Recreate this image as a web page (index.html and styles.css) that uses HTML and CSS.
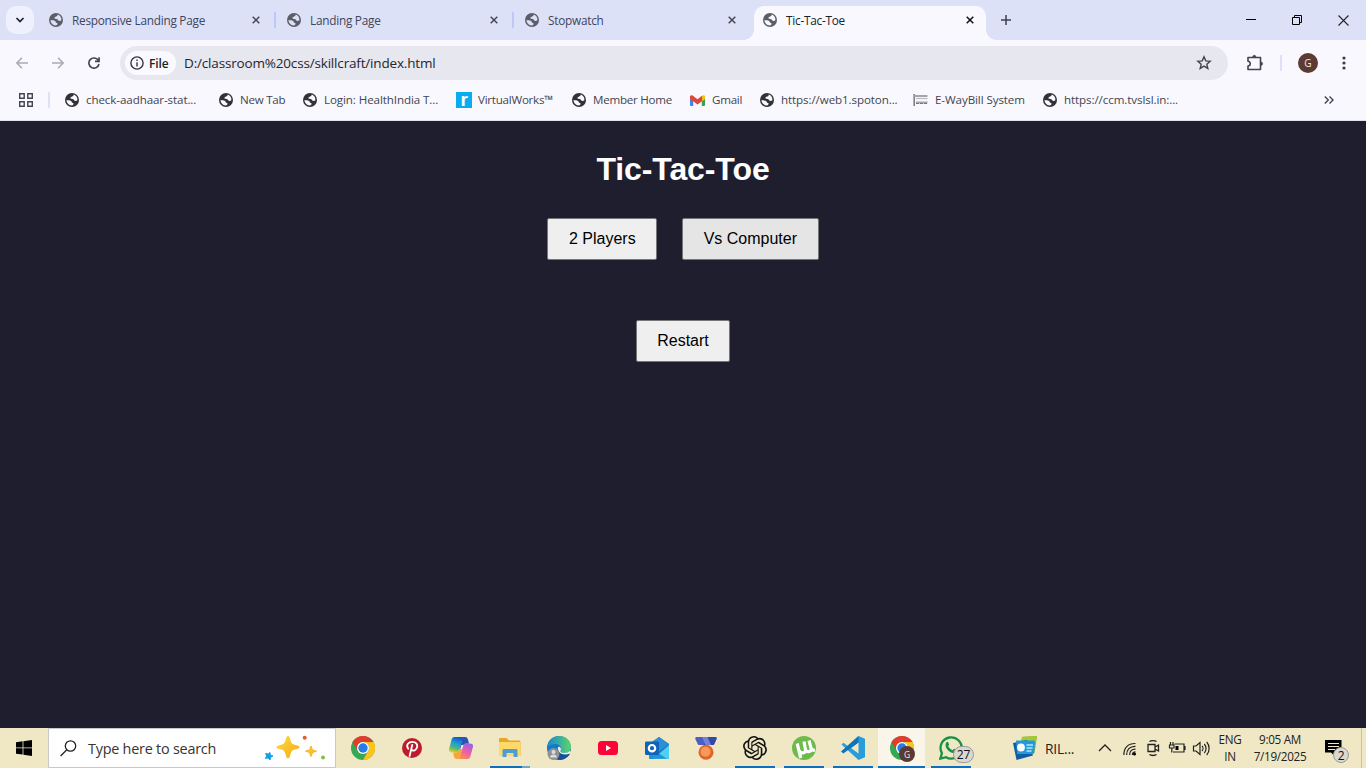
FILE: index.html
```
<!DOCTYPE html>
<html lang="en">
<head>
<meta charset="utf-8">
<title>Tic-Tac-Toe</title>
<link rel="stylesheet" href="styles.css">
</head>
<body>
<svg class="defs" aria-hidden="true">
  <defs>
    <symbol id="globe" viewBox="0 0 14 14"><circle cx="7" cy="7" r="7" fill="currentColor"/><path class="land" d="M8.500 1.500C9 2.800 8 3.200 7 3.500 6 4 5 4.500 5.600 5.500 6.500 6.300 8.500 5.600 9 6.900c.5 1.300 2.300 1.200 3.400.3C12.600 4.200 11 2 8.500 1.500zM1.500 7.100C3 7.500 5 7.100 6 8.100c1 .8.500 1.800 2 2 1.200.3.500 2.100-1 2.400C4 12.600 1.500 10.100 1.500 7.100z"/></symbol>
    <symbol id="close" viewBox="0 0 8 8"><path d="M.7.700l6.600 6.600M7.300.700L.7 7.300" stroke="currentColor" stroke-width="1.500"/></symbol>
    <linearGradient id="gold" x2="1" y2="1"><stop stop-color="#ffdc42"/><stop offset="1" stop-color="#f5a912"/></linearGradient>
    <linearGradient id="edgeTop"><stop stop-color="#1689d0"/><stop offset="1" stop-color="#5ed568"/></linearGradient>
    <linearGradient id="copA" x1=".6" x2=".3" y2="1"><stop stop-color="#174ccf"/><stop offset=".45" stop-color="#1ba6cf"/><stop offset=".75" stop-color="#5cb96b"/><stop offset="1" stop-color="#e9cf31"/></linearGradient>
    <linearGradient id="copB" x1=".8" x2=".2" y2="1"><stop stop-color="#9461ed"/><stop offset=".5" stop-color="#ee5fa4"/><stop offset="1" stop-color="#fa9545"/></linearGradient>
    <symbol id="chrome" viewBox="0 0 24 24"><circle cx="12" cy="12" r="12" fill="#34a853"/><path d="M1.600 6A12 12 0 0 1 22.400 6H12a6 6 0 0 0-5.200 9z" fill="#e33b2e"/><path d="M22.400 6A12 12 0 0 1 12 24l5.200-9A6 6 0 0 0 12 6z" fill="#fcc31e"/><circle cx="12" cy="12" r="6" fill="#fff"/><circle cx="12" cy="12" r="4.700" fill="#277ae8"/></symbol>
  </defs>
</svg>

<header class="browser">
  <div class="tabstrip">
    <button class="tab-search"><svg width="10" height="6" viewBox="0 0 10 6"><path d="M1.500 1L5 4.500 8.500 1" fill="none" stroke="#202124" stroke-width="1.700"/></svg></button>
    <div class="tab"><svg class="fav"><use href="#globe"/></svg><span class="tab-title">Responsive Landing Page</span><svg class="x"><use href="#close"/></svg></div>
    <div class="tab sep"><svg class="fav"><use href="#globe"/></svg><span class="tab-title">Landing Page</span><svg class="x"><use href="#close"/></svg></div>
    <div class="tab sep"><svg class="fav"><use href="#globe"/></svg><span class="tab-title">Stopwatch</span><svg class="x"><use href="#close"/></svg></div>
    <div class="tab active"><svg class="fav"><use href="#globe"/></svg><span class="tab-title">Tic-Tac-Toe</span><svg class="x"><use href="#close"/></svg></div>
    <svg class="plus" width="10" height="10" viewBox="0 0 10 10"><path d="M5 0v10M0 5h10" stroke="#3c4050" stroke-width="1.500"/></svg>
    <div class="window-controls">
      <svg width="10" height="10" viewBox="0 0 10 10"><path d="M0 4.500h10" stroke="#000"/></svg>
      <svg width="10" height="10" viewBox="0 0 10 10"><path d="M.5 2.500h7v7h-7zM2.500 2.500v-2h7v7h-2" fill="none" stroke="#000"/></svg>
      <svg width="11" height="11" viewBox="0 0 11 11"><path d="M.5.500l10 10M10.500.500l-10 10" fill="none" stroke="#222" stroke-width="1.100"/></svg>
    </div>
  </div>

  <div class="toolbar">
    <div class="nav">
      <svg width="12" height="12" viewBox="0 0 12 12"><path d="M12 6H1M6 .800L.900 6 6 11.200" fill="none" stroke="#a9abb2" stroke-width="1.500"/></svg>
      <svg width="12" height="12" viewBox="0 0 12 12"><path d="M0 6h11M6 .800L11.100 6 6 11.200" fill="none" stroke="#a9abb2" stroke-width="1.500"/></svg>
      <svg width="12" height="12" viewBox="0 0 12 12"><path d="M10.300 3.300A5.100 5.100 0 1 0 11 7M11.100.300v4.100H7" fill="none" stroke="#41434d" stroke-width="1.600"/></svg>
    </div>
    <div class="omnibox">
      <span class="chip"><svg width="14" height="14" viewBox="0 0 14 14"><circle cx="7" cy="7" r="6.100" fill="none" stroke="#34363c" stroke-width="1.400"/><path d="M7 6.200v4.200M7 3.500v1.500" stroke="#34363c" stroke-width="1.400"/></svg><span class="chip-label">File</span></span>
      <span class="url">D:/classroom%20css/skillcraft/index.html</span>
      <svg class="star" width="16" height="16" viewBox="0 0 16 16"><path d="M8 1.800l1.750 4.050 4.400.4-3.330 2.900 1 4.300L8 11.150l-3.820 2.300 1-4.300-3.330-2.900 4.400-.4z" fill="none" stroke="#42444e" stroke-width="1.400"/></svg>
    </div>
    <svg class="puzzle" width="18" height="18" viewBox="0 0 18 18"><path d="M2 3.500h12.500v12H2v-3.500c3 0 3-4.800 0-4.800z" fill="none" stroke="#42444e" stroke-width="1.600" stroke-linejoin="round"/><path d="M6.700 3.200a1.600 1.900 0 0 1 3.200 0zM14.700 8a1.900 1.700 0 0 1 0 3.400z" fill="#42444e" stroke="#42444e" stroke-width=".7"/></svg>
    <span class="divider"></span>
    <span class="avatar">G</span>
    <svg class="kebab" width="4" height="14" viewBox="0 0 4 14"><g fill="#3c3e47"><circle cx="2" cy="2" r="1.600"/><circle cx="2" cy="7" r="1.600"/><circle cx="2" cy="12" r="1.600"/></g></svg>
  </div>

  <nav class="bookmarks">
    <span class="apps-grid"><svg width="14" height="14" viewBox="0 0 14 14"><path d="M.7.700h4.500v4.500H.7zM8.800.700h4.500v4.500H8.800zM.7 8.800h4.500v4.500H.7zM8.800 8.800h4.500v4.500H8.800z" fill="none" stroke="#42444e" stroke-width="1.400"/></svg></span>
    <span class="divider"></span>
    <a class="bm"><svg class="fav"><use href="#globe"/></svg><span class="clipped">check-aadhaar-stat...</span></a>
    <a class="bm"><svg class="fav"><use href="#globe"/></svg><span>New Tab</span></a>
    <a class="bm"><svg class="fav"><use href="#globe"/></svg><span class="clipped">Login: HealthIndia T...</span></a>
    <a class="bm"><span class="r-logo">r</span><span>VirtualWorks™</span></a>
    <a class="bm"><svg class="fav"><use href="#globe"/></svg><span>Member Home</span></a>
    <a class="bm"><svg class="gm" width="15" height="11" viewBox="0 0 15 11"><path d="M0 1.500h3.200V11H1a1 1 0 0 1-1-1z" fill="#3f83ef"/><path d="M11.800 1.500H15V10a1 1 0 0 1-1 1h-2.200z" fill="#32a454"/><path d="M11.800 1.500L13 .300C14 0 15 .500 15 1.700V4l-3.200 2.400z" fill="#f7bc1c"/><path d="M0 1.700C0 .300 1.600-.300 2.600.500l4.900 3.700L12 .700v5.600L7.500 9.500 0 4z" fill="#e3453a"/></svg><span>Gmail</span></a>
    <a class="bm"><svg class="fav"><use href="#globe"/></svg><span class="clipped">https://web1.spoton...</span></a>
    <a class="bm"><svg class="eway" width="15" height="14" viewBox="0 0 15 14"><path d="M1.200 1v12" stroke="#77777c" stroke-width="1.500"/><path d="M0 3h14.500M3 9.500h11.500" stroke="#a5a5a9" stroke-width="2"/><path d="M3 5.500h11.500" stroke="#b9b9be" stroke-width="1.200"/><path d="M3 10.500h11" stroke="#77777c" stroke-dasharray="3 1"/></svg><span class="clipped">E-WayBill System</span></a>
    <a class="bm"><svg class="fav"><use href="#globe"/></svg><span class="clipped">https://ccm.tvslsl.in:...</span></a>
    <svg class="more" width="10" height="8" viewBox="0 0 10 8"><path d="M.8.500L4.300 4 .8 7.500M5.500.500L9 4 5.500 7.500" fill="none" stroke="#42444e" stroke-width="1.400"/></svg>
  </nav>
</header>

<main class="game">
  <h1>Tic-Tac-Toe</h1>
  <div class="modes"><button>2 Players</button><button class="hover">Vs Computer</button></div>
  <button>Restart</button>
</main>

<footer class="taskbar">
  <div class="start"><svg width="16" height="16" viewBox="0 0 16 16"><path d="M0 2.200l6.600-.9v6.200H0zM7.400 1.200L16 0v7.500H7.400zM0 8.300h6.600v6.300L0 13.700zM7.400 8.300H16V16l-8.600-1.200z"/></svg></div>
  <div class="search">
    <svg width="17" height="17" viewBox="0 0 17 17"><circle cx="10.500" cy="6" r="5.200" fill="none" stroke="#222" stroke-width="1.300"/><path d="M6.800 9.800L.6 16" stroke="#222" stroke-width="1.300"/></svg>
    <span>Type here to search</span>
    <svg class="sparkles" width="62" height="26" viewBox="0 0 62 26"><path d="M24 1c1.300 0 1.600 1 2.400 3.800 1 3.600 1.800 4.400 5.300 5.200 2.900.7 3.800 1 3.800 2.100s-.9 1.400-3.800 2.100c-3.500.8-4.300 1.700-5.300 5.200-.8 2.900-1.100 3.800-2.400 3.800s-1.600-.9-2.400-3.800c-1-3.500-1.800-4.400-5.300-5.200-2.900-.7-3.800-1-3.800-2.100s.9-1.400 3.800-2.100c3.500-.8 4.300-1.600 5.300-5.200C22.400 2 22.700 1 24 1z" fill="url(#gold)"/><path d="M47 11l1.500 3.900 4 1.300-4 1.300L47 21.500l-1.500-4-4-1.300 4-1.300z" fill="url(#gold)" stroke="#f5b52b" stroke-linejoin="round"/><path d="M6 17.500l.3 2.700 2.700.8-2.400 1.300-.6 2.700-1.800-2-2.900.3 1.500-2.300-1.200-2.500 2.600.6z" fill="#15a0e8" stroke="#15a0e8" stroke-linejoin="round"/><circle cx="40.700" cy="2.700" r="2" fill="#e5592e"/><circle cx="59" cy="22.500" r="1.900" fill="#7fbd43"/></svg>
  </div>
  <div class="apps">
    <div class="app"><svg><use href="#chrome"/></svg></div>
    <div class="app"><svg class="pin" viewBox="0 0 20 20"><circle cx="10" cy="10" r="10" fill="#bb1d2d"/><path d="M6.200 10.700C3.500 6.600 6.700 3.900 10.400 3.900c3.500 0 5.200 2.100 4.800 4.800-.4 3-3.900 5.300-5.700 2.900M10.300 6.800L7.600 18" fill="none" stroke="#fff" stroke-width="1.800" stroke-linecap="round"/></svg></div>
    <div class="app"><svg viewBox="0 0 24 24"><path d="M5.500 1H16c-2 .5-2.600 2-3.200 4l-2.600 8.500c-.6 2-1.400 3-3.200 3H3c-2.500 0-3.500-1.500-2.800-4L2.500 4c.6-2 1.300-3 3-3z" fill="url(#copA)"/><path d="M18.500 23H8c2-.5 2.600-2 3.200-4l2.600-8.500c.6-2 1.400-3 3.200-3H21c2.500 0 3.500 1.500 2.800 4L21.500 20c-.6 2-1.300 3-3 3z" fill="url(#copB)"/><path d="M12 1h4c2 0 2.600 1 3.100 3l.9 3.500h-3c-1.800 0-2.600 1-3.200 3l-.8 2.500h-2.700L12.800 5z" fill="#2455b8"/><path d="M4.200 16.500H7c1.800 0 2.600-1 3.200-3l.2-.5H13l-1.800 6c-.6 2-1.200 3.500-3.200 4-2 0-2.600-1-3.100-3z" fill="#f7a534"/><path d="M11.200 13l1.200-4h2l-1.200 4z" fill="#f7f3ef"/></svg></div>
    <div class="app run-multi"><svg viewBox="0 0 24 24"><path d="M1 3.500c0-.8.500-1.500 1.300-1.500h6.200L11 4.500h10c1 0 1.500.6 1.500 1.500v14H2c-.6 0-1-.4-1-1z" fill="#e5a62d"/><path d="M1 6h21.500v13c0 .6-.4 1-1 1H2c-.6 0-1-.4-1-1z" fill="#ffd967"/><path d="M6 13h12c1 0 1.500.5 1.500 1.500v6.500h-4v-4h-7v4h-4v-6.500C4.500 13.500 5 13 6 13z" fill="#4c9dd4"/></svg></div>
    <div class="app"><svg viewBox="0 0 24 24"><circle cx="12" cy="12" r="12" fill="#1477c9"/><path d="M.4 11C1 4.400 6 0 12 0c7 0 12 5 12 10.500 0 4-3 6.500-7 6.500-3 0-4.500-1.100-3.500-2.500 3-6-6-9.500-13.100-3.500z" fill="url(#edgeTop)"/><path d="M12 10.500c1.800 1 2.500 2.500 1.500 4-.7 1.500.8 2.500 3.500 2.500 2.500 0 4.500-1 5.800-2.300l1.200 2.300-3 2c-5 2.500-11-.5-10.500-5.500.1-1.200.5-2.200 1.500-3z" fill="#f4f3df"/><path d="M12 24c5 0 9-2.500 11-6.500-7 2.600-12-.5-12-5-5 3-4 9 1 11.500z" fill="#154f9d"/><circle cx="6.500" cy="18" r="6" fill="#8f9192"/><circle cx="6.500" cy="16" r="2" fill="#dedede"/><path d="M3 21.500c0-4 7-4 7 0z" fill="#dedede"/></svg></div>
    <div class="app"><svg class="yt" viewBox="0 0 20 14"><rect width="20" height="14" rx="3.500" fill="#ff0338"/><path d="M8 4v6l5-3z" fill="#fff"/></svg></div>
    <div class="app"><svg viewBox="0 0 24 24"><path d="M4 9L14 1l10 7v13.500c0 .8-.6 1.500-1.500 1.500h-17C4.500 23 4 22.500 4 21z" fill="#1470b7"/><path d="M5 7l9-6 10 7-10 8z" fill="#2c8fd6"/><path d="M24 9v12.500c0 .8-.6 1.500-1.500 1.500H8z" fill="#4fd0ee"/><path d="M4 11l18 11.800H5.500C4.600 22.800 4 22 4 21z" fill="#2293d7"/><rect y="5.500" width="14" height="13.500" rx="1.300" fill="#0f64b7"/><circle cx="7" cy="12.200" r="3.200" fill="none" stroke="#fff" stroke-width="2.200"/></svg></div>
    <div class="app"><svg viewBox="0 0 24 24"><path d="M2.500 1h19c1 0 1.500 1 1 2l-2 4.500c-.4 1-1 1.500-2 1.500h-13c-1 0-1.600-.5-2-1.500L1.300 3C1 2 1.500 1 2.500 1z" fill="#4b5fc4"/><path d="M13 1h8.500c1 0 1.500 1 1 2l-2 4.500c-.4 1-1 1.500-2 1.500H10z" fill="#3448a4"/><path d="M8 1h5.500l3.500 8h-5.500z" fill="#6f82dc"/><circle cx="12" cy="16.300" r="7.500" fill="#e0652a"/><circle cx="11.500" cy="15.800" r="5" fill="#f59a58"/></svg></div>
    <div class="app run"><svg viewBox="0 0 24 24"><path fill="#111" d="M22.2819 9.8211a5.9847 5.9847 0 0 0-.5157-4.9108 6.0462 6.0462 0 0 0-6.5098-2.9A6.0651 6.0651 0 0 0 4.9807 4.1818a5.9847 5.9847 0 0 0-3.9977 2.9 6.0462 6.0462 0 0 0 .7427 7.0966 5.98 5.98 0 0 0 .511 4.9107 6.051 6.051 0 0 0 6.5146 2.9001A5.9847 5.9847 0 0 0 13.2599 24a6.0557 6.0557 0 0 0 5.7718-4.2058 5.9894 5.9894 0 0 0 3.9977-2.9001 6.0557 6.0557 0 0 0-.7475-7.0729zm-9.022 12.6081a4.4755 4.4755 0 0 1-2.8764-1.0408l.1419-.0804 4.7783-2.7582a.7948.7948 0 0 0 .3927-.6813v-6.7369l2.02 1.1686a.071.071 0 0 1 .038.052v5.5826a4.504 4.504 0 0 1-4.4945 4.4944zm-9.6607-4.1254a4.4708 4.4708 0 0 1-.5346-3.0137l.142.0852 4.783 2.7582a.7712.7712 0 0 0 .7806 0l5.8428-3.3685v2.3324a.0804.0804 0 0 1-.0332.0615L9.74 19.9502a4.4992 4.4992 0 0 1-6.1408-1.6464zM2.3408 7.8956a4.485 4.485 0 0 1 2.3655-1.9728V11.6a.7664.7664 0 0 0 .3879.6765l5.8144 3.3543-2.0201 1.1685a.0757.0757 0 0 1-.071 0l-4.8303-2.7865A4.504 4.504 0 0 1 2.3408 7.872zm16.5963 3.8558L13.1038 8.364 15.1192 7.2a.0757.0757 0 0 1 .071 0l4.8303 2.7913a4.4944 4.4944 0 0 1-.6765 8.1042v-5.6772a.79.79 0 0 0-.407-.667zm2.0107-3.0231l-.142-.0852-4.7735-2.7818a.7759.7759 0 0 0-.7854 0L9.409 9.2297V6.8974a.0662.0662 0 0 1 .0284-.0615l4.8303-2.7866a4.4992 4.4992 0 0 1 6.6802 4.66zM8.3065 12.863l-2.02-1.1638a.0804.0804 0 0 1-.038-.0567V6.0742a4.4992 4.4992 0 0 1 7.3757-3.4537l-.142.0805L8.704 5.459a.7948.7948 0 0 0-.3927.6813zm1.0976-2.3654l2.602-1.4998 2.6069 1.4998v2.9994l-2.5974 1.4997-2.6067-1.4997Z"/></svg></div>
    <div class="app run"><svg viewBox="0 0 24 24"><circle cx="12" cy="12" r="12" fill="#6dbb4b"/><path d="M5.200 7.500L8.700 22M7 14.500c.8 3 6.800 3.500 6.500-.5L12 5.500M13.300 13c.7 3.200 4 3.500 6.200 1L17 4.500M19 12c.6 2 2 2.500 4 2" fill="none" stroke="#fff" stroke-width="3.200"/></svg></div>
    <div class="app run"><svg viewBox="0 0 24 24"><path d="M17.500 0L6.700 10 2.500 6.700.500 8.400 17.500 24 24 21.200V2.800z" fill="#2a9cdc"/><path d="M17.500 6.500L10 12l7.500 5.500z" fill="#f0e8c5"/><path d="M0 15.500L17.500 0v6.500L2.300 17.500z" fill="#1274b8"/></svg></div>
    <div class="app run current"><svg><use href="#chrome"/></svg><span class="profile">G</span></div>
    <div class="app run"><svg viewBox="0 0 24 24"><path d="M1.400 22.600l1.500-5.500A10.600 10.600 0 1 1 7 21.200z" fill="none" stroke="#159447" stroke-width="2.300"/><path d="M7.200 6.500c1.300-1.300 2-.5 2.700 1.400.5 1-.3 1.600-.8 2.200 1 2 2.500 3.300 4.500 4.200.8-.6 1.300-1.800 2.100-1.400 2.200 1 2.800 1.300 2 2.800-1.500 2.300-4.600 1.500-7.200-.2C7.800 13.800 5.400 10 7.200 6.500z" fill="#159447"/></svg><span class="count">27</span></div>
  </div>
  <div class="news"><svg width="24" height="24" viewBox="0 0 24 24"><path d="M9 1l15-1-2.500 17L8 13z" fill="#69ae4d"/><path d="M9 .800L24 0l-1 6H8z" fill="#a5c838"/><path d="M0 7l14-3 6 15.500L3.500 24z" fill="#125ca3"/><path d="M3 4.500h18c.6 0 1 .4 1 1L21 17c0 .6-.4 1-1 1H4z" fill="#2298df"/><circle cx="8" cy="11.500" r="3.900" fill="#fff"/><path d="M13.500 9H20M13.500 12h6M13.500 15h5" stroke="#b5e6f5" stroke-width="1.500"/></svg><span>RIL...</span></div>
  <div class="tray">
    <svg viewBox="0 0 18 18"><path d="M3 12l6-6 6 6" fill="none" stroke="#222" stroke-width="1.300"/></svg>
    <svg viewBox="0 0 18 18"><g fill="none" stroke="#222" stroke-width="1.200"><path d="M4 16C3.500 9 8 4.300 15.500 4.500M6.700 16c-.3-5 3-9 8.800-8.700M9.700 16c-.3-3.500 2-6 5.800-5.900M12.400 16c-.1-1.800 1.100-3.100 3.100-3.200"/></g><circle cx="14.500" cy="15" r="1.500"/></svg>
    <svg viewBox="0 0 18 18"><path d="M5.500 2.500c1.500-1.300 5.500-1.300 7 0M5.500 15.500c1.500 1.300 5.500 1.300 7 0M4 5.500h7v7H4zM11 8l3.500-2v6L11 10z" fill="none" stroke="#222" stroke-width="1.300"/></svg>
    <svg viewBox="0 0 18 18"><path d="M6.500 5H16v8H5M16 7.500h1v3h-1M2.500 3v3M5 3v3M1.500 6H6v3H1.500zM3.800 9v4.500" fill="none" stroke="#222" stroke-width="1.200"/><path d="M7.500 7h3v4h-3z"/></svg>
    <svg viewBox="0 0 18 18"><path d="M1.500 7H4l4-3.500v12L4 12H1.500zM10 7c1.300 1.300 1.300 3.700 0 5M12.300 5c2.300 2.500 2.300 6.500 0 9M14.700 3c3.200 3.500 3.200 9.500 0 13" fill="none" stroke="#222" stroke-width="1.200"/></svg>
  </div>
  <div class="lang"><span>ENG</span><span>IN</span></div>
  <div class="clock"><span>9:05 AM</span><span>7/19/2025</span></div>
  <div class="notify"><svg width="17" height="17" viewBox="0 0 17 17"><path d="M0 0h16.500v12.500h-7V16l-3.500-3.500H0z"/><path d="M3 3.500h11M3 6.500h11M3 9.500h7" stroke="#f1eac7"/></svg><span class="count small">2</span></div>
</footer>
</body>
</html>
```
FILE: styles.css
```
* { box-sizing: border-box; }
body { margin: 0; width: 1366px; height: 768px; display: flex; flex-direction: column; overflow: hidden; background: #1e1e2f; font-family: "Open Sans", "Noto Sans", sans-serif; font-size: 12px; }
svg { display: block; flex: none; }
.defs { position: absolute; width: 0; height: 0; }
button { cursor: default; }

.browser { height: 121px; background: #f9f8fe; border-bottom: 1px solid #e1e1eb; flex: none; --surface: #f9f8fe; }
.tabstrip { height: 40px; display: flex; background: #dde1f7; color: #41455a; --surface: #dde1f7; }
.tab-search { width: 28px; height: 28px; margin: 6px 7px 0 6px; padding: 0; border: 0; border-radius: 10px; background: #eff0fd; display: grid; place-items: center; flex: none; }
.tab { width: 238px; height: 34px; margin-top: 6px; padding: 0 19px 6px 8px; display: flex; align-items: center; position: relative; flex: none; }
.tab.sep::before { content: ""; position: absolute; left: -5px; top: 6px; width: 2px; height: 16px; background: #bdc8f8; }
.fav { width: 14px; height: 14px; color: #5b5e67; flex: none; }
.land { fill: var(--surface); }
.tab-title { margin-left: 9px; flex: 1; white-space: nowrap; letter-spacing: -.25px; font-size: 11.800px; }
.x { width: 8px; height: 8px; color: #444754; }
.tab.active { width: 232px; margin-left: -1px; padding: 0 12px 6px 9px; background: #f9f8fe; border-radius: 10px 10px 0 0; color: #202124; --surface: #f9f8fe; }
.active .x { color: #111; }
.tab.active::before, .tab.active::after { content: ""; position: absolute; bottom: 0; width: 10px; height: 10px; }
.tab.active::before { left: -10px; background: radial-gradient(circle at 0 0, #dde1f7 9.500px, #f9f8fe 10px); }
.tab.active::after { right: -10px; background: radial-gradient(circle at 100% 0, #dde1f7 9.500px, #f9f8fe 10px); }
.plus { margin: 15px 0 0 15px; }
.window-controls { margin: 15px 17px 0 auto; display: flex; gap: 36px; }

.toolbar { height: 46px; display: flex; align-items: center; }
.nav { width: 120px; padding-left: 16px; display: flex; gap: 24px; }
.omnibox { width: 1108px; height: 34px; border-radius: 17px; background: #e7e7f0; display: flex; align-items: center; padding: 0 16px 0 5px; }
.chip { width: 51px; height: 24px; border-radius: 12px; background: #faf9ff; display: flex; align-items: center; padding-left: 5px; gap: 5px; }
.chip-label { font-weight: 600; font-size: 12px; color: #202124; letter-spacing: -.1px; }
.url { margin-left: 8px; font-size: 13.500px; color: #25262b; flex: 1; letter-spacing: -.17px; }
.puzzle { margin-left: 18px; }
.toolbar .divider { margin-left: 16px; }
.divider { width: 2px; height: 16px; background: #dde1f8; }
.avatar { width: 20px; height: 20px; margin-left: 16px; border-radius: 50%; background: #5b3b32; color: #eee; display: grid; place-items: center; font-size: 10px; }
.kebab { margin-left: 24px; }

.bookmarks { height: 34px; margin-top: -3px; display: grid; grid-template-columns: 48px 17px 154px 84px 153px 116px 118px 70px 153px 130px 281px 10px; align-items: center; color: #43454e; font-size: 11.600px; letter-spacing: -.25px; }
.bookmarks .bm span { position: relative; top: -1px; }
.bookmarks .clipped { letter-spacing: -.1px; }
.apps-grid { padding-left: 19px; }
.bm { display: flex; align-items: center; gap: 7px; white-space: nowrap; }
.bm .fav { color: #303238; }
.bookmarks .bm .r-logo { top: 0; width: 16px; height: 16px; background: #08adf0; color: #fff; font: bold 19px/15px "Liberation Sans", sans-serif; text-align: center; margin-right: -1px; }

.game { flex: 1; display: flex; flex-direction: column; align-items: center; font-family: "Liberation Sans", Arial, sans-serif; }
.game h1 { margin: 30px 0; color: #fff; font-size: 32px; line-height: 37px; letter-spacing: -.1px; }
.modes { display: flex; gap: 25px; margin-bottom: 60px; }
.game button { height: 42px; padding: 0 20.500px; border: 1px solid #767676; border-radius: 2px; background: #efefef; color: #000; font: 16px "Liberation Sans", Arial, sans-serif; }
.game button.hover { background: #e5e5e5; }

.taskbar { height: 40px; display: flex; background: #f0e8c5; color: #222; flex: none; }
.start { width: 48px; padding: 12px 0 0 16px; }
.search { width: 288px; background: #fff; border: 1px solid #c8c8c8; display: flex; align-items: center; padding: 0 9px 0 11px; font-size: 14.400px; color: #353535; }
.search span { margin-left: 11px; letter-spacing: -.23px; white-space: nowrap; }
.sparkles { margin-left: auto; }
.apps { display: flex; margin-left: 2px; }
.app { width: 49px; height: 40px; display: grid; place-items: center; position: relative; flex: none; }
.app svg { width: 24px; height: 24px; }
.app .pin { width: 20px; height: 20px; }
.app .yt { width: 20px; height: 14px; }
.run::after, .run-multi::after { content: ""; position: absolute; left: 5px; bottom: 0; width: 40px; height: 2px; background: #0d6fc0; }
.run-multi::after { left: 5px; background: linear-gradient(90deg, #0d6fc0 32px, #74a6c8 32px); }
.current::before { content: ""; position: absolute; inset: 0 1px 0 1px; background: #f9f5e8; z-index: 0; }
.current svg { position: relative; }
.current::after { left: 1px; width: 47px; }
.profile { position: absolute; left: 22px; top: 18px; width: 16px; height: 16px; border-radius: 50%; background: #583b35; color: #eee; display: grid; place-items: center; font-size: 8.500px; }
.count { position: absolute; left: 27px; top: 18px; width: 21px; height: 17px; border: 1px solid #999; border-radius: 9px; background: #d9d8d1; display: grid; place-items: center; font-size: 12px; line-height: 15px; font-weight: 500; color: #111; letter-spacing: -.2px; }
.news { width: 84px; margin-left: 38px; display: flex; align-items: center; gap: 8px; font-size: 13.800px; letter-spacing: -.2px; }
.tray { display: flex; align-items: center; gap: 6px; margin-left: -1px; }
.tray svg { width: 18px; height: 18px; }
.lang, .clock { display: flex; flex-direction: column; align-items: center; line-height: 17px; padding-top: 3px; font-size: 11.700px; letter-spacing: -.25px; }
.lang { width: 36px; margin-left: 2px; }
.clock { width: 62px; margin-left: 1px; letter-spacing: -.3px; }
.notify { position: relative; margin-left: 14px; padding-top: 12px; width: 37px; border-right: 1px solid #c7c1a9; }
.count.small { left: 8px; top: 19px; width: 16px; height: 16px; }
```
